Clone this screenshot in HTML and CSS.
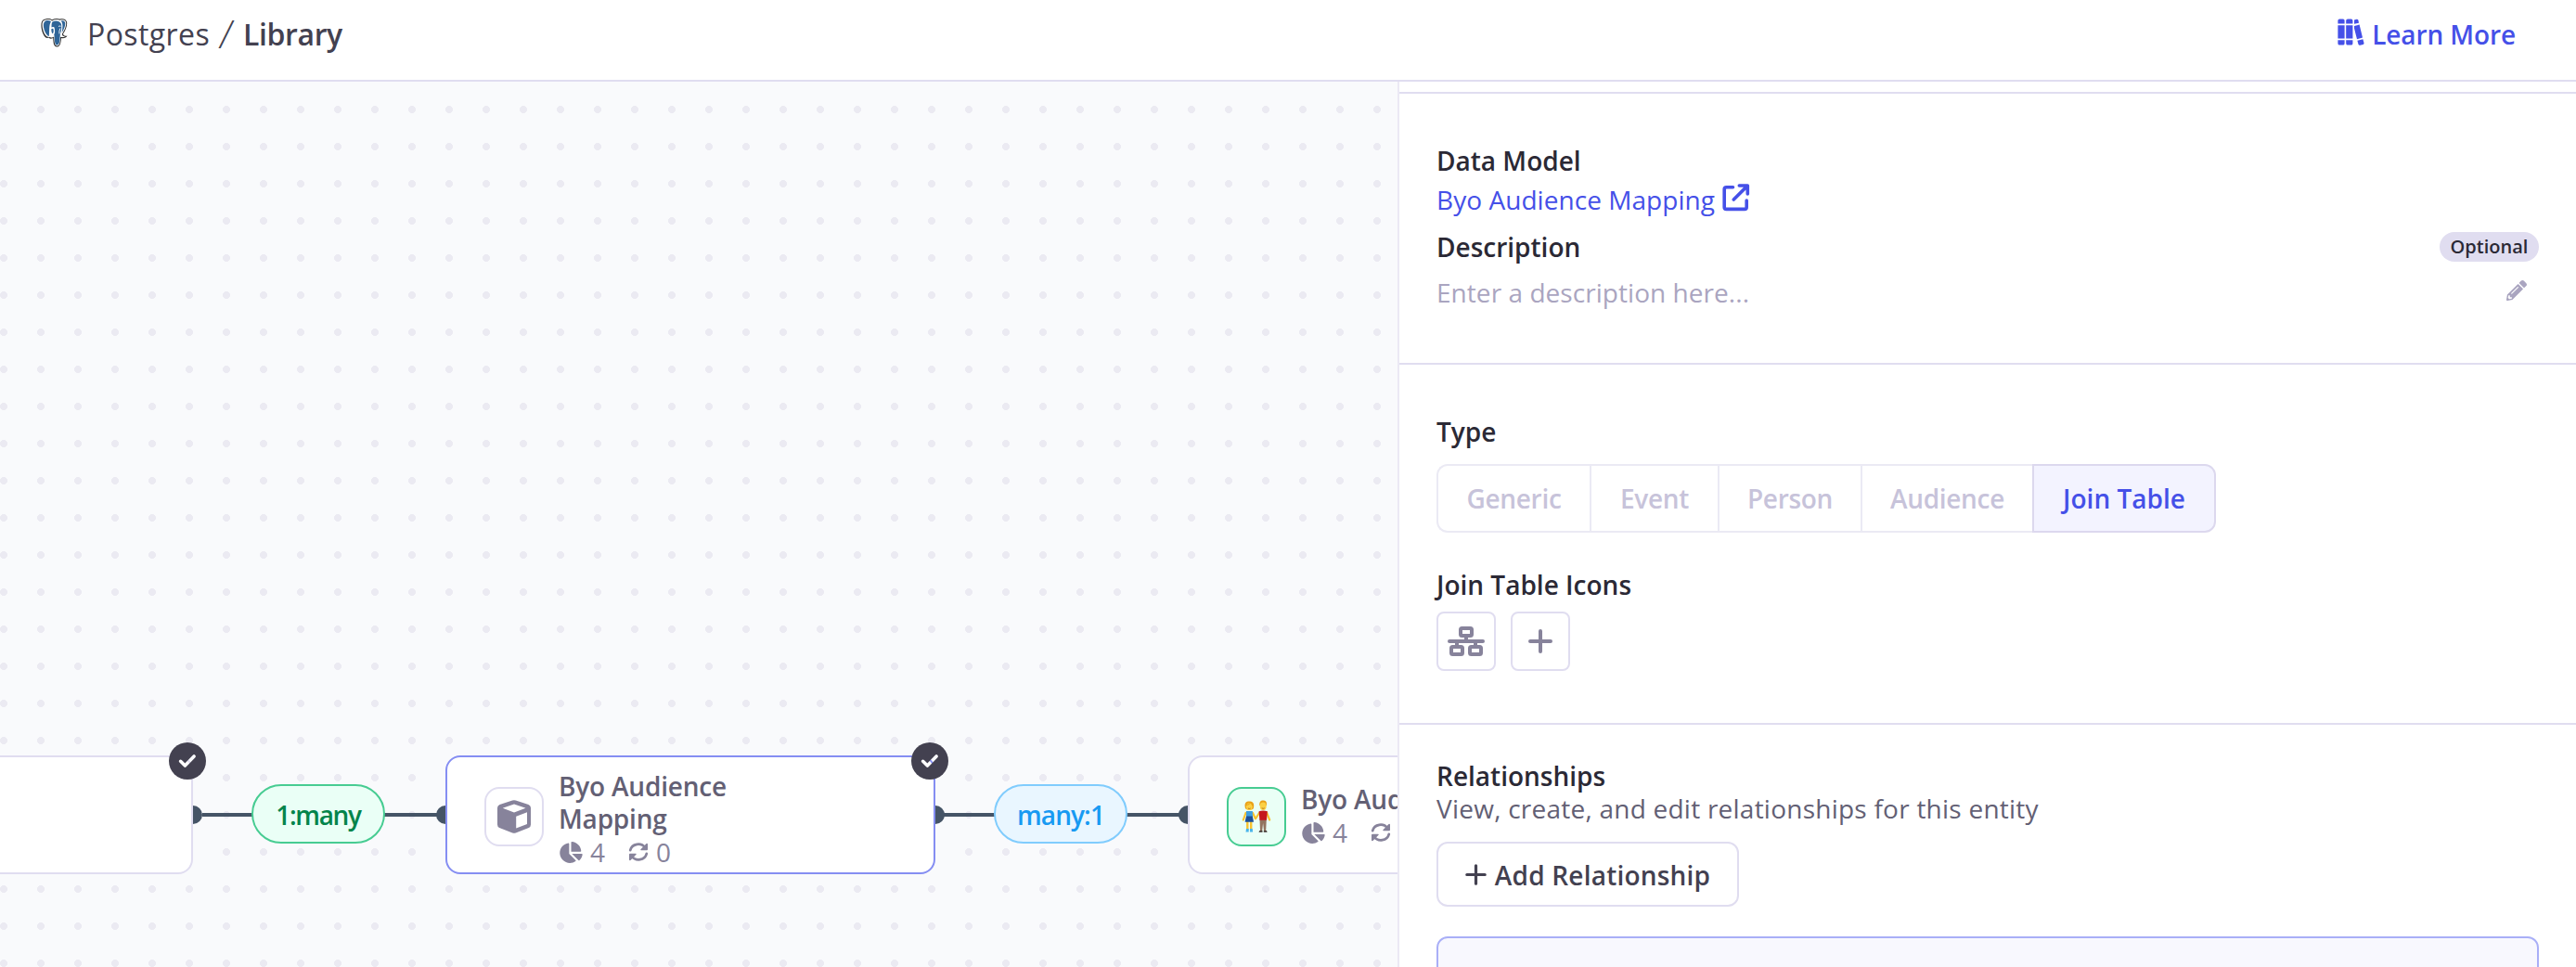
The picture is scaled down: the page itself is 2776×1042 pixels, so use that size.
FILE: index.html
```html
<!DOCTYPE html>
<html lang="en">
<head>
<meta charset="utf-8">
<title>Postgres / Library</title>
<link rel="stylesheet" href="styles.css">
</head>
<body>
<svg width="0" height="0" class="defs" aria-hidden="true">
  <defs>
    <symbol id="pie" viewBox="0 0 544 512"><path d="M527.79 288H290.5l158.03 158.03c6.04 6.04 15.98 6.53 22.19.68 38.7-36.46 65.32-85.61 73.13-140.86 1.34-9.46-6.51-17.85-16.06-17.85zm-15.83-64.8C503.72 103.74 408.26 8.28 288.8.04 279.68-.59 272 7.1 272 16.24V240h223.77c9.14 0 16.82-7.68 16.19-16.8zM224 288V50.71c0-9.55-8.39-17.4-17.84-16.06C86.99 51.49-4.1 155.6.14 280.37 4.5 408.51 114.83 513.59 243.03 511.98c50.4-.63 96.97-16.87 135.26-44.03 7.9-5.6 8.42-17.23 1.57-24.08L224 288z"/></symbol>
    <symbol id="sync" viewBox="0 0 22 20">
      <path d="M2.2 8.2C4 1 14 -.6 18.2 5.6M19.8 11.8C18 19 8 20.6 3.8 14.4" fill="none" stroke="currentColor" stroke-width="2.7" stroke-linecap="round"/>
      <path d="M20 .8q1 0 1 1V7.2q0 1-1 1H14q-1.200 0-.6-1L19.300 1.200zM2 19.200q-1 0-1-1V12.800q0-1 1-1H8q1.200 0 .6 1L2.700 18.800z"/>
    </symbol>
    <symbol id="check" viewBox="0 0 40 40">
      <mask id="tick"><rect width="40" height="40" fill="#fff"/><path d="M12.600 20.300l4.800 4.700 9.700-10" fill="none" stroke="#000" stroke-width="3.600" stroke-linecap="round" stroke-linejoin="round"/></mask>
      <circle cx="20" cy="20" r="20" mask="url(#tick)"/>
    </symbol>
  </defs>
</svg>

<header class="topbar">
  <nav class="crumbs">
    <svg class="logo" width="30" height="33" viewBox="0 0 30 33">
      <path d="M5 1.500C8 .6 10.500 1 12 2.200 15 .8 18 .6 20.500 1.600 24 .5 27 1.500 28 4.500c.8 3-1 9-4 13 .5 2 2 2.500 4.500 2-1 2.200-4 3.200-6.500 2.500-.3 4-.8 9.500-4.500 9.500-3.800 0-4-4.500-4.300-9.500-2 1-4 .8-4.700-.4C3 24.500-1.500 9 1.200 4 2 2.500 3.300 1.900 5 1.500z" fill="#333"/>
      <path d="M5 2.600C8 1.700 10.300 2.100 12 3.400 15 1.900 18 1.700 20.500 2.700 24 1.700 26.500 2.500 27.100 5c.6 3-1.300 8.500-4.300 12.700.3 1.800 1.500 2.700 3.500 2.500-1.500 1-3.500 1.100-5.200.6-.2 4.500-.5 9.600-3.600 9.600-2.900 0-3-4.600-3.300-9.800-2 1.300-3.500 1.200-4.200.1C4 23 .2 9 2 4.700 2.500 3.500 3.500 3 5 2.600z" fill="#fff"/>
      <path d="M5.200 3.400C7.500 2.600 9.500 3 11 4.200 8.500 8 9.500 14 8.800 20 5 20-.2 6 5.200 3.400zM12.500 4.600C15.500 2.600 20 3 21.800 6.500c1 3 .4 7-.8 11-.8 3 .2 12-3.600 12-3.300 0-2-7-3.200-11.500 1.300-1.500 1-5 .3-7.500-1-.8-2.300-.6-3 .1 0-2.500 0-4.600 1-6zM21.800 3.400C24 2.900 25.700 3.400 26.200 5.500c.4 2.500-1.100 7-3.500 10.500.6-4 1.700-9-.9-12.600zM11.300 12.200q1.500-1 2.200 0 .7 3.500-.6 5-1.600-.5-1.600-5z" fill="#2f6598"/>
      <path d="M19 9.500q1.500-.9 2.700-.2M20 17.500q-.6-3 .9-6" fill="none" stroke="#fff" stroke-width=".9"/>
    </svg>
    <span class="crumb">Postgres</span><span class="slash">/</span><span class="crumb current">Library</span>
  </nav>
  <a class="learn">
    <svg width="30" height="30" viewBox="0 0 30 30" fill="#4550e8">
      <path d="M.4 5.400V2.200Q.4.400 2.200.400H6q1.600 0 1.600 1.800V5.400zM.4 7.300H7.600V21.500H.4zM.4 23.300H7.600V26.700Q7.600 28.600 6 28.600H2.200Q.4 28.600.4 26.700zM9.200 5.400V2.200Q9.200.400 11 .400h3.800q1.600 0 1.600 1.800V5.400zM9.200 7.300h7.200V21.500H9.200zM9.200 23.300h7.200V26.700Q16.400 28.600 14.800 28.600H11Q9.200 28.600 9.200 26.700zM18 5.700V1.500L20.500.700Q22 .400 22.400 1.800L23 4.700zM18 8 23.600 6.600 27 20.400 21 22.200 18 10.500zM21.400 23.800 27.400 22.200 28.500 26.200Q28.700 27.700 27.500 28.100L24.300 28.800Q22.800 29 22.400 27.600z"/>
    </svg>
    <span>Learn More</span>
  </a>
</header>

<main class="workspace">
  <section class="canvas">
    <svg class="edges" width="1506" height="954" viewBox="0 0 1506 954">
      <path d="M218 790H480M1008 790H1280" stroke="#455466" stroke-width="4"/>
      <g fill="#455466"><circle cx="208" cy="790" r="10"/><circle cx="480" cy="790" r="10"/><circle cx="1008" cy="790" r="10"/><circle cx="1280" cy="790" r="10"/></g>
    </svg>
    <span class="cardinality one-many">1:many</span>
    <span class="cardinality many-one">many:1</span>

    <article class="node node-a">
      <svg class="badge" width="40" height="40" fill="#434150"><use href="#check"/></svg>
    </article>

    <article class="node node-b">
      <div class="node-icon">
        <svg width="36" height="36" viewBox="0 0 36 36" fill="#87839b"><path fill-rule="evenodd" d="M16.200.4Q18-.1 19.800.4L33.500 5Q36 6 36 8.500V26.500Q36 29 33.800 29.900L19.800 35.400Q18 36.100 16.200 35.400L2.200 29.900Q0 29 0 26.500V8.500Q0 6 2.500 5zM5.700 8.800 18 13.400 30.500 8.800 18 4.400zM20.200 17.800V30.400L32 26V13.200z"/></svg>
      </div>
      <div class="node-body two-line">
        <h3>Byo Audience<br>Mapping</h3>
        <div class="stats"><svg class="i-pie"><use href="#pie"/></svg><span>4</span><svg class="i-sync"><use href="#sync"/></svg><span>0</span></div>
      </div>
      <svg class="badge" width="40" height="40" fill="#434150"><use href="#check"/></svg>
    </article>

    <article class="node node-c">
      <div class="node-icon green">
        <svg width="32" height="36" viewBox="0 0 32 36">
          <path d="M4.500 14 1.800 21.500M12 14l2.800 6M19 14l-3.800 6M27 13.500l3.200 8" stroke="#f7c22f" stroke-width="2.200" stroke-linecap="round"/>
          <path d="M6.300 23v9M10.200 23v9" stroke="#f7c22f" stroke-width="2.400"/>
          <path d="M5 31h2.700v3.500H4.500zM9 31h2.700l.4 3.500H9z" fill="#48b4ea"/>
          <path d="M5 12h6.800l.2 6-.4 1H5z" fill="#3f9fe0"/><path d="M5 17.500h6.800l1.200 6.300H3.600z" fill="#1d4f96"/>
          <path d="M4 9C2.500 3 5 1.500 8.200 1.500s6.200 1.800 4.600 7.500c-.4 2-7.800 2-8.800 0z" fill="#e9a018"/><ellipse cx="8.300" cy="7.200" rx="3.400" ry="3.900" fill="#fbd043"/><path d="M5 5.500Q9 5 9.500 3q1.500 1 2.200 3" stroke="#e9a018" fill="none"/>
          <path d="M19.500 21h7.300l-.6 12H24l-.9-8-.9 8H20z" fill="#93745f"/><path d="M19.300 33h3.200v1.800h-4zM23.800 33H27l.6 1.800h-3.800z" fill="#423633"/>
          <path d="M18.600 12.300q4.600-1.800 9.200 0l-.8 9.500h-7.600z" fill="#c5161d"/>
          <path d="M19.300 6C19 2 20.500.600 23 .600s4.500 1 4 5.400z" fill="#e9a018"/><ellipse cx="23.200" cy="6.700" rx="3.500" ry="4.200" fill="#fbd043"/>
          <path d="M21.700 8.800q1.500 1 3 0M6.900 9q1.400.9 2.800 0" stroke="#a4601d" stroke-width=".8" fill="none"/>
        </svg>
      </div>
      <div class="node-body">
        <h3>Byo Audience</h3>
        <div class="stats"><svg class="i-pie"><use href="#pie"/></svg><span>4</span><svg class="i-sync"><use href="#sync"/></svg></div>
      </div>
    </article>
  </section>

  <aside class="panel">
    <div class="panel-top"></div>
    <section class="group details">
      <h2>Data Model</h2>
      <a class="model-link"><span>Byo Audience Mapping</span>
        <svg width="30" height="30" viewBox="0 0 30 30" fill="none" stroke="#4550e8" stroke-width="3.600" stroke-linecap="round" stroke-linejoin="round"><path d="M11.500 3.800H4.500Q2.200 3.800 2.200 6V25.200Q2.200 27.400 4.500 27.400H24Q26.200 27.400 26.200 25.200V18M12.300 17 27 2.400M18.300 2H27.300V11"/></svg>
      </a>
      <div class="row desc"><h2>Description</h2><span class="pill">Optional</span></div>
      <div class="row value"><span class="placeholder">Enter a description here...</span>
        <svg class="pencil" width="22" height="22" viewBox="0 0 512 512" fill="#aaa5c0"><path d="M497.900 142.100l-46.100 46.100c-4.700 4.700-12.300 4.700-17 0l-111-111c-4.700-4.700-4.700-12.300 0-17l46.100-46.100c18.700-18.700 49.100-18.700 67.900 0l60.100 60.100c18.800 18.700 18.800 49.100 0 67.900zM284.200 99.800L21.600 362.400.4 483.900c-2.900 16.400 11.400 30.600 27.800 27.800l121.500-21.300 262.600-262.600c4.700-4.700 4.700-12.300 0-17l-111-111c-4.800-4.700-12.400-4.700-17.100 0zM124.100 339.900c-5.500-5.500-5.500-14.300 0-19.800l154-154c5.500-5.500 14.300-5.500 19.800 0s5.500 14.300 0 19.800l-154 154c-5.500 5.500-14.300 5.500-19.800 0zM88 424h48v36.300l-64.500 11.300-31.100-31.100L51.700 376H88v48z"/></svg>
      </div>
    </section>

    <section class="group types">
      <h2>Type</h2>
      <div class="segments">
        <span>Generic</span><span>Event</span><span>Person</span><span>Audience</span><span class="active">Join Table</span>
      </div>
      <h2>Join Table Icons</h2>
      <div class="icon-row">
        <button class="icon-btn"><svg width="40" height="32" viewBox="0 0 40 32" fill="none" stroke="#87839b" stroke-width="4"><rect x="14" y="2" width="12" height="8" rx="1.500"/><rect x="4" y="22" width="12" height="8" rx="1.500"/><rect x="24" y="22" width="12" height="8" rx="1.500"/><path d="M2 16H38" stroke-linecap="round"/><path d="M20 11v5M10 16v5M30 16v5"/></svg></button>
        <button class="icon-btn"><svg width="26" height="26" viewBox="0 0 26 26" stroke="#87839b" stroke-width="4" stroke-linecap="round"><path d="M13 2V24M2 13H24"/></svg></button>
      </div>
    </section>

    <section class="relations">
      <h2>Relationships</h2>
      <p>View, create, and edit relationships for this entity</p>
      <button class="add"><svg width="23" height="23" viewBox="0 0 23 23" stroke="#434150" stroke-width="3.200" stroke-linecap="round"><path d="M11.500 1.800V21.200M1.800 11.500H21.200"/></svg><span>Add Relationship</span></button>
      <div class="card"></div>
    </section>
  </aside>
</main>
</body>
</html>
```
FILE: styles.css
```css
* { box-sizing: border-box; }
html, body { height: 100%; }
body {
  margin: 0;
  display: flex;
  flex-direction: column;
  overflow: hidden;
  background: #fff;
  color: #2b2935;
  font: 400 28px/42px "Open Sans", "Noto Sans", sans-serif;
}
h2, h3, p { margin: 0; font-size: 28px; }
h2 { font-weight: 600; line-height: 42px; }
svg { display: block; flex: none; }
.defs { position: absolute; }
button { font: inherit; background: #fff; padding: 0; }

/* Top bar */
.topbar {
  flex: none;
  height: 88px;
  border-bottom: 2px solid #e0ddf0;
  padding: 17px 65px 0 44px;
  display: flex;
  justify-content: space-between;
  align-items: flex-start;
  line-height: 40px;
}
.crumbs { display: flex; color: #434150; font-size: 32px; }
.logo { margin: 2px 20px 0 0; }
.crumb { letter-spacing: .4px; }
.crumb.current { font-weight: 600; letter-spacing: -.4px; }
.slash { width: 36px; text-align: center; font-size: 42px; font-weight: 300; line-height: 37px; transform: skewX(-7deg); }
.learn { display: flex; gap: 7px; color: #4550e8; font-weight: 600; letter-spacing: -.1px; }
.learn svg { margin-top: 3px; }

.workspace { flex: 1; min-height: 0; display: flex; }

/* Graph canvas */
.canvas {
  position: relative;
  overflow: hidden;
  width: 1508px;
  flex: none;
  border-right: 2px solid #ebe9f4;
  background: #f9fafc radial-gradient(circle, #ebeaf2 3.700px, transparent 4.300px) -16px 10px / 40px 40px;
}
.edges { position: absolute; left: 0; top: 0; }
.cardinality {
  position: absolute;
  top: 757px;
  width: 144px;
  height: 64px;
  border: 2px solid;
  border-radius: 32px;
  text-align: center;
  font-weight: 600;
  line-height: 63px;
}
.one-many { left: 271px; color: #04844b; border-color: #47cc92; background: #eafff6; letter-spacing: -1.300px; }
.many-one { left: 1071px; color: #189af2; border-color: #80ccfd; background: #e9f6ff; letter-spacing: -.9px; }
.node {
  position: absolute;
  top: 726px;
  width: 528px;
  height: 128px;
  padding: 0 40px;
  border: 2px solid #e0ddf0;
  border-radius: 16px;
  background: #fff;
  display: flex;
  align-items: center;
  gap: 16px;
}
.node-a { left: -320px; }
.node-b { left: 480px; border-color: #858ef2; }
.node-c { left: 1280px; }
.badge { position: absolute; right: -16px; top: -16px; }
.node-icon {
  width: 64px;
  height: 64px;
  margin-top: 4px;
  border: 2px solid #e0ddf0;
  border-radius: 16px;
  display: grid;
  place-items: center;
  flex: none;
}
.node-icon.green { border-color: #47cc92; background: #eafff6; }
.node-body { padding-top: 3px; white-space: nowrap; color: #636074; }
.node-body.two-line { padding-top: 10px; }
h3 { font-weight: 600; line-height: 35px; letter-spacing: -.2px; }
.stats { display: flex; align-items: center; height: 37px; line-height: 37px; color: #87839b; fill: #87839b; }
.i-pie { width: 25px; height: 23px; margin: 0 8px 0 1px; }
.i-sync { width: 22px; height: 20px; margin: 0 8px 0 25px; }

/* Details panel */
.panel { flex: 1; min-width: 0; overflow: hidden; background: #fff; }
.panel-top { height: 13px; border-bottom: 2px solid #e0ddf0; }
.group { padding: 51px 40px 0; border-bottom: 2px solid #e0ddf0; }
.details { height: 292px; }
.types { height: 388px; }
.model-link { display: flex; gap: 8px; color: #4550e8; letter-spacing: .05px; }
.model-link svg { margin-top: 4px; }
.row { display: flex; justify-content: space-between; align-items: center; }
.desc { margin: 9px 0 7px; }
.pill { width: 107px; height: 32px; border-radius: 16px; background: #e0ddf0; font-size: 20px; font-weight: 600; line-height: 32px; text-align: center; }
.placeholder { color: #aaa5c0; letter-spacing: .05px; }
.pencil { margin: -4px 13px 0 0; }
.segments {
  margin: 14px 0 37px;
  display: grid;
  grid-template-columns: 165px 138px 154px 185px 198px;
  height: 72px;
  color: #c7c3da;
  font-weight: 600;
  line-height: 70px;
  letter-spacing: -.3px;
  text-align: center;
}
.segments span { border: 2px solid #ebeaf4; border-right: 0; }
.segments span:first-child { border-radius: 12px 0 0 12px; }
.segments .active { border: 2px solid #dcd8ee; border-radius: 0 12px 12px 0; background: #f3f3ff; color: #4550e8; letter-spacing: 0; }
.icon-row { display: flex; gap: 16px; margin-top: 8px; }
.icon-btn { width: 64px; height: 64px; border: 2px solid #e0ddf0; border-radius: 8px; display: grid; place-items: center; }
.relations { padding: 38px 40px 0; }
.relations h2, .relations p { line-height: 35px; }
.relations p { color: #636074; letter-spacing: .24px; }
.add {
  margin-top: 18px;
  width: 326px;
  height: 70px;
  border: 2px solid #e0ddf0;
  border-radius: 12px;
  display: flex;
  align-items: center;
  justify-content: center;
  gap: 9px;
  color: #434150;
  font-weight: 600;
  letter-spacing: .2px;
}
.add span { padding-top: 2px; }
.card { margin-top: 32px; height: 120px; border: 2px solid #a9aff7; border-radius: 12px; background: #f8f8fe; }
```
